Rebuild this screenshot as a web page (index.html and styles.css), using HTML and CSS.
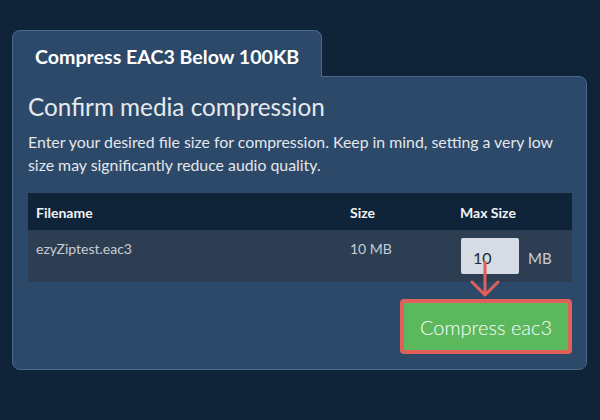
FILE: index.html
```html
<!DOCTYPE html>
<html>
<head>
<meta charset="utf-8">
<link rel="stylesheet" href="styles.css">
</head>
<body>
<div class="wrap">
  <div class="tab">Compress EAC3 Below 100KB</div>
  <div class="panel">
    <h2 class="title">Confirm media compression</h2>
    <p class="desc">Enter your desired file size for compression. Keep in mind, setting a very low size may significantly reduce audio quality.</p>
    <div class="table">
      <div class="row head">
        <div class="cell">Filename</div>
        <div class="cell">Size</div>
        <div class="cell">Max Size</div>
      </div>
      <div class="row body">
        <div class="cell">ezyZiptest.eac3</div>
        <div class="cell">10 MB</div>
        <div class="cell maxcell">
          <div class="input">10</div>
          <span class="unit">MB</span>
        </div>
      </div>
    </div>
    <div class="actions">
      <button class="btn">Compress eac3</button>
      <svg class="arrow" width="32" height="40" viewBox="0 0 32 40">
        <path d="M16 1 V34 M3 21 L16 34 L29 21" fill="none" stroke="#e0605a" stroke-width="3" stroke-linecap="round" stroke-linejoin="round"/>
      </svg>
    </div>
  </div>
</div>
</body>
</html>
```
FILE: styles.css
```css
* { box-sizing: border-box; }
html, body { margin: 0; padding: 0; }
body {
  background: #0f2339;
  font-family: Lato, "Noto Sans", sans-serif;
  width: 600px;
  height: 420px;
  overflow: hidden;
}
.wrap {
  padding: 30px 13px 0 12px;
}
.tab {
  width: 310px;
  height: 47px;
  padding: 14px 0 0 22px;
  background: #2d4969;
  border: 1px solid #4b6789;
  border-bottom: none;
  border-radius: 8px 8px 0 0;
  margin-bottom: -1px;
  position: relative;
  z-index: 1;
  color: #ffffff;
  font-weight: 700;
  font-size: 19.6px;
  line-height: 24px;
}
.panel {
  background: #2d4969;
  border: 1px solid #4b6789;
  border-radius: 0 8px 8px 8px;
  padding: 15px 14px 15px 15px;
}
.title {
  margin: 0;
  font-weight: 400;
  font-size: 24.3px;
  line-height: 29px;
  color: #e6e9ed;
}
.desc {
  margin: 9px 0 0 0;
  font-size: 15.85px;
  line-height: 23px;
  color: #e4e7eb;
}
.table {
  margin-top: 17px;
}
.row {
  display: grid;
  grid-template-columns: 314px 110px 120px;
}
.head {
  background: #0f2339;
  color: #f2f4f6;
  font-weight: 700;
}
.body {
  background: #2d3e53;
  color: #c9cdd3;
  height: 52px;
}
.cell {
  padding: 8px;
  font-size: 14px;
  line-height: 21px;
}
.head .cell { padding-top: 9px; padding-bottom: 7px; }
.maxcell {
  display: flex;
  align-items: center;
  gap: 9px;
  padding-left: 9px;
}
.input {
  width: 58px;
  height: 36px;
  background: #d7dce4;
  border-radius: 2px;
  color: #222a33;
  font-size: 16px;
  line-height: 21px;
  padding: 9px 12px 0;
}
.unit {
  color: #c9cdd3;
  font-size: 15px;
  padding-top: 4px;
}
.actions {
  display: flex;
  justify-content: flex-end;
  margin-top: 17px;
  position: relative;
}
.btn {
  width: 172px;
  height: 55px;
  background: #5cb85c;
  border: 4px solid #e0605a;
  border-radius: 4px;
  color: #ffffff;
  font-family: Lato, "Noto Sans", sans-serif;
  font-size: 20px;
  font-weight: 300;
  padding: 0;
}
.arrow {
  position: absolute;
  left: 441px;
  top: -38px;
}
```
